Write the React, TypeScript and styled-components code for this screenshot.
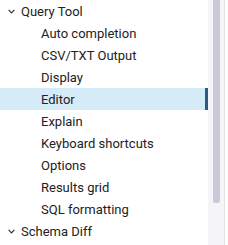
import styled, { createGlobalStyle } from "styled-components";

const GlobalStyle = createGlobalStyle`
  html, body {
    margin: 0;
    padding: 0;
    background: #ffffff;
  }
  body {
    font-family: Roboto, "Liberation Sans", sans-serif;
  }
`;

const Container = styled.div`
  display: flex;
  width: 228px;
  height: 245px;
  overflow: hidden;
  background: #ffffff;
`;

const Tree = styled.div`
  width: 208px;
  display: flex;
  flex-direction: column;
`;

const Row = styled.div<{ $level: number; $active?: boolean }>`
  height: 22px;
  display: flex;
  align-items: center;
  padding-left: ${(p) => (p.$level === 0 ? 8 : 41)}px;
  font-size: 13px;
  color: #222222;
  white-space: nowrap;
  background: ${(p) => (p.$active ? "#d5ebf8" : "transparent")};
  border-right: 3px solid ${(p) => (p.$active ? "#2b5b80" : "transparent")};
`;

const Chevron = styled.svg`
  width: 7px;
  height: 5px;
  margin-right: 6px;
  margin-top: 1px;
`;

const Track = styled.div`
  width: 16px;
  background: #f5f5f7;
  border-right: 1px solid #e2e2e6;
  display: flex;
  justify-content: center;
`;

const Thumb = styled.div`
  width: 7px;
  height: 203px;
  background: #c9c9d8;
  border-radius: 0 0 2px 2px;
`;

const items = [
  "Auto completion",
  "CSV/TXT Output",
  "Display",
  "Editor",
  "Explain",
  "Keyboard shortcuts",
  "Options",
  "Results grid",
  "SQL formatting",
];

const Arrow = () => (
  <Chevron viewBox="0 0 7 5">
    <path d="M0.6 0.8 L3.5 3.8 L6.4 0.8" fill="none" stroke="#333" strokeWidth="1.2" />
  </Chevron>
);

const App = () => {
  return (
    <Container>
      <GlobalStyle />
      <Tree>
        <Row $level={0}>
          <Arrow />
          Query Tool
        </Row>
        {items.map((item) => (
          <Row key={item} $level={1} $active={item === "Editor"}>
            {item}
          </Row>
        ))}
        <Row $level={0}>
          <Arrow />
          Schema Diff
        </Row>
      </Tree>
      <Track>
        <Thumb />
      </Track>
    </Container>
  );
};

export default App;
